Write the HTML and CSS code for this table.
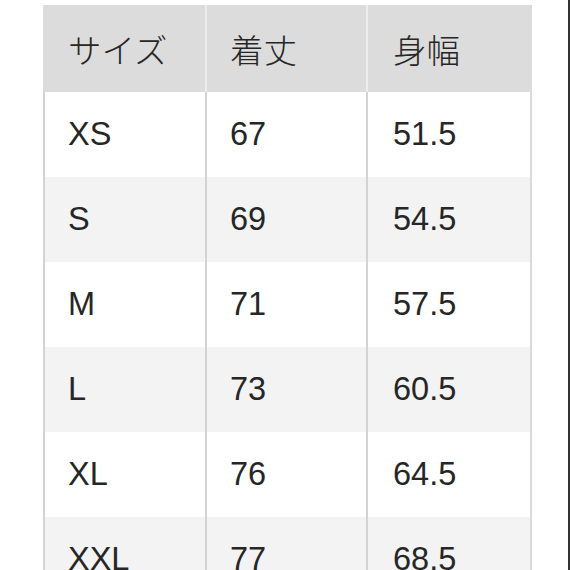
FILE: index.html
```html
<!DOCTYPE html>
<html lang="ja">
<head>
<meta charset="utf-8">
<link rel="stylesheet" href="styles.css">
</head>
<body>
<div class="page">
  <table class="size-table">
    <colgroup>
      <col class="col-size">
      <col class="col-length">
      <col class="col-width">
    </colgroup>
    <thead>
      <tr><th>サイズ</th><th>着丈</th><th>身幅</th></tr>
    </thead>
    <tbody>
      <tr><td>XS</td><td>67</td><td>51.5</td></tr>
      <tr><td>S</td><td>69</td><td>54.5</td></tr>
      <tr><td>M</td><td>71</td><td>57.5</td></tr>
      <tr><td>L</td><td>73</td><td>60.5</td></tr>
      <tr><td>XL</td><td>76</td><td>64.5</td></tr>
      <tr><td>XXL</td><td>77</td><td>68.5</td></tr>
    </tbody>
  </table>
</div>
</body>
</html>
```

FILE: styles.css
```css
html, body {
  margin: 0;
  padding: 0;
  background: #ffffff;
}
body {
  box-sizing: border-box;
  width: 570px;
  height: 570px;
  overflow: hidden;
  border-right: 2px solid #333333;
}
.page {
  padding: 5px 0 0 43px;
}
.size-table {
  border-collapse: separate;
  border-spacing: 0;
  table-layout: fixed;
  width: 489px;
  color: #262626;
  font-family: "Liberation Sans", "Noto Sans CJK JP", sans-serif;
  font-size: 32.5px;
}
.col-size { width: 162px; }
.col-length { width: 161px; }
.col-width { width: 166px; }

.size-table th,
.size-table td {
  box-sizing: border-box;
  text-align: left;
  padding: 0 0 0 23px;
  font-weight: normal;
  white-space: nowrap;
}
.size-table th:nth-child(3),
.size-table td:nth-child(3) {
  padding-left: 25px;
}

.size-table th {
  height: 87px;
  background: #dcdcdc;
  font-family: "Noto Sans CJK JP", sans-serif;
  font-size: 33.5px;
  font-weight: 300;
  border-left: 2px solid #ededed;
  vertical-align: middle;
}
.size-table th:first-child {
  border-left-color: #dcdcdc;
}
.size-table th:last-child {
  border-right: 2px solid #dcdcdc;
}
.size-table td {
  height: 85px;
  border-left: 2px solid #d3d3d3;
  vertical-align: middle;
}
.size-table td:last-child {
  border-right: 2px solid #dadada;
}
.size-table tbody tr:nth-child(odd) td {
  background: #ffffff;
}
.size-table tbody tr:nth-child(even) td {
  background: #f3f3f3;
}
```
